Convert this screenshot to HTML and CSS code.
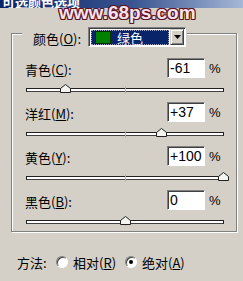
FILE: index.html
```html
<!DOCTYPE html>
<html lang="zh-CN">
<head>
    <meta charset="UTF-8">
    <title>可选颜色选项</title>
    <link rel="stylesheet" href="styles.css">
</head>
<body>
    <div class="titlebar"><span class="title">可选颜色选项</span></div>
    <div class="watermark">www.68ps.com</div>

    <div class="group">
        <div class="legend">
            <span class="label">颜色(<u>O</u>):</span>
            <div class="select">
                <div class="select-value"><span class="swatch"></span>绿色</div>
                <div class="select-btn">
                    <svg width="7" height="4" viewBox="0 0 7 4"><path d="M0 0H7L3.5 4Z" fill="#000"/></svg>
                </div>
            </div>
        </div>

        <div class="field">
            <div class="field-head">
                <span class="label">青色(<u>C</u>):</span>
                <div class="input">-61</div>
                <span class="pct">%</span>
            </div>
            <div class="track">
                <span class="tick"></span>
                <svg class="thumb" style="left: 19.5%" width="11" height="9" viewBox="0 0 11 9"><path d="M0.5 8.5V4.5L5.5 0.5L10.5 4.5V8.5Z" fill="#f4f4f0" stroke="#202020"/></svg>
            </div>
        </div>

        <div class="field">
            <div class="field-head">
                <span class="label">洋红(<u>M</u>):</span>
                <div class="input">+37</div>
                <span class="pct">%</span>
            </div>
            <div class="track">
                <span class="tick"></span>
                <svg class="thumb" style="left: 68.5%" width="11" height="9" viewBox="0 0 11 9"><path d="M0.5 8.5V4.5L5.5 0.5L10.5 4.5V8.5Z" fill="#f4f4f0" stroke="#202020"/></svg>
            </div>
        </div>

        <div class="field">
            <div class="field-head">
                <span class="label">黄色(<u>Y</u>):</span>
                <div class="input">+100</div>
                <span class="pct">%</span>
            </div>
            <div class="track">
                <span class="tick"></span>
                <svg class="thumb" style="left: 100%" width="11" height="9" viewBox="0 0 11 9"><path d="M0.5 8.5V4.5L5.5 0.5L10.5 4.5V8.5Z" fill="#f4f4f0" stroke="#202020"/></svg>
            </div>
        </div>

        <div class="field">
            <div class="field-head">
                <span class="label">黑色(<u>B</u>):</span>
                <div class="input">0</div>
                <span class="pct">%</span>
            </div>
            <div class="track">
                <span class="tick"></span>
                <svg class="thumb" style="left: 50%" width="11" height="9" viewBox="0 0 11 9"><path d="M0.5 8.5V4.5L5.5 0.5L10.5 4.5V8.5Z" fill="#f4f4f0" stroke="#202020"/></svg>
            </div>
        </div>
    </div>

    <div class="method">
        <span class="method-label">方法:</span>
        <span class="radio"></span>
        <span class="radio-text">相对(<u>R</u>)</span>
        <span class="radio checked"></span>
        <span class="radio-text">绝对(<u>A</u>)</span>
    </div>
</body>
</html>
```

FILE: styles.css
```css
body {
    margin: 0;
    width: 243px;
    height: 281px;
    overflow: hidden;
    position: relative;
    background-color: #d4d0c8;
    font-family: "Noto Sans CJK SC", "Liberation Sans", sans-serif;
    font-size: 13px;
    color: #000;
}
u {
    text-decoration: underline;
    text-underline-offset: 1px;
}
.titlebar {
    height: 8px;
    overflow: hidden;
    background: linear-gradient(to right, #0a246a, #3a5590 55%, #a6b8d8);
}
.title {
    display: block;
    margin: -6px 0 0 2px;
    color: #fff;
    font-weight: bold;
    font-size: 13px;
    line-height: 15px;
}
.watermark {
    position: absolute;
    left: 59px;
    top: 2px;
    font-family: "Liberation Sans", Arial, sans-serif;
    font-weight: bold;
    font-size: 19px;
    line-height: 22px;
    color: #f8e2ec;
    text-shadow: 1px 0 0 #5e1626, -1px 0 0 #5e1626, 0 1px 0 #5e1626, 0 -1px 0 #5e1626,
                 1px 1px 0 #5e1626, -1px -1px 0 #5e1626, 1px -1px 0 #5e1626, -1px 1px 0 #5e1626;
}
.group {
    margin: 25px 0 0 11px;
    width: 226px;
    box-sizing: border-box;
    border: 1px solid #808080;
    box-shadow: inset 1px 1px 0 #fff, 1px 1px 0 #fff;
    padding: 0 12px 7px 13px;
}
.legend {
    display: flex;
    align-items: flex-start;
    width: fit-content;
    height: 20px;
    margin: -7px 0 0 -3px;
    padding: 0 1px 0 11px;
    background-color: #d4d0c8;
}
.legend .label {
    margin-top: 3px;
    line-height: 18px;
    width: 55px;
}
.select {
    display: flex;
    width: 98px;
    height: 20px;
    box-sizing: border-box;
    border: 1px solid;
    border-color: #808080 #fff #fff #808080;
    box-shadow: inset 1px 1px 0 #404040;
    background-color: #fff;
    padding: 2px 1px 1px 2px;
}
.select-value {
    flex: 1;
    display: flex;
    align-items: center;
    background-color: #0a246a;
    outline: 1px dotted #a0a0c0;
    outline-offset: -1px;
    color: #fff;
    font-size: 13px;
    margin-right: 1px;
    padding-left: 4px;
}
.swatch {
    width: 14px;
    height: 11px;
    background-color: #008000;
    border: 1px solid #003000;
    margin-right: 6px;
}
.select-btn {
    width: 14px;
    display: flex;
    align-items: center;
    justify-content: center;
    box-sizing: border-box;
    background-color: #d4d0c8;
    border: 1px solid;
    border-color: #d4d0c8 #404040 #404040 #d4d0c8;
    box-shadow: inset 1px 1px 0 #fff, inset -1px -1px 0 #808080;
    margin-top: -1px;
}
.field {
    margin-top: 11px;
}
.field + .field {
    margin-top: 10px;
}
.field-head {
    display: flex;
    align-items: center;
    height: 20px;
}
.field-head .label {
    flex: 1;
    line-height: 20px;
    margin-top: 4px;
}
.input {
    width: 38px;
    height: 20px;
    box-sizing: border-box;
    border: 1px solid;
    border-color: #808080 #fff #fff #808080;
    box-shadow: inset 1px 1px 0 #404040;
    background-color: #fff;
    padding: 0 0 0 2px;
    font-family: "Liberation Sans", Arial, sans-serif;
    font-size: 14px;
    line-height: 18px;
}
.pct {
    width: 15px;
    margin-left: 4px;
    margin-top: 2px;
    font-family: "Liberation Sans", Arial, sans-serif;
    font-size: 13px;
    line-height: 20px;
}
.track {
    position: relative;
    margin: 10px 0 0 1px;
    height: 4px;
    box-sizing: border-box;
    border: 1px solid #202020;
    border-bottom-color: #404040;
    background-color: #fff;
}
.tick {
    position: absolute;
    left: 50%;
    top: -3px;
    width: 1px;
    height: 8px;
    background-color: #b8b4ac;
}
.thumb {
    position: absolute;
    top: -5px;
    margin-left: -5px;
}
.method {
    display: flex;
    align-items: center;
    height: 16px;
    margin-top: 22px;
    padding-left: 17px;
}
.method-label {
    width: 39px;
}
.radio {
    width: 12px;
    height: 12px;
    box-sizing: border-box;
    border-radius: 50%;
    border: 1px solid;
    border-color: #808080 #fff #fff #808080;
    box-shadow: inset 1px 1px 0 #404040;
    background-color: #fff;
    position: relative;
}
.radio.checked::after {
    content: "";
    position: absolute;
    left: 3px;
    top: 3px;
    width: 4px;
    height: 4px;
    border-radius: 50%;
    background-color: #000;
}
.radio-text {
    margin-left: 5px;
    width: 52px;
}
```
